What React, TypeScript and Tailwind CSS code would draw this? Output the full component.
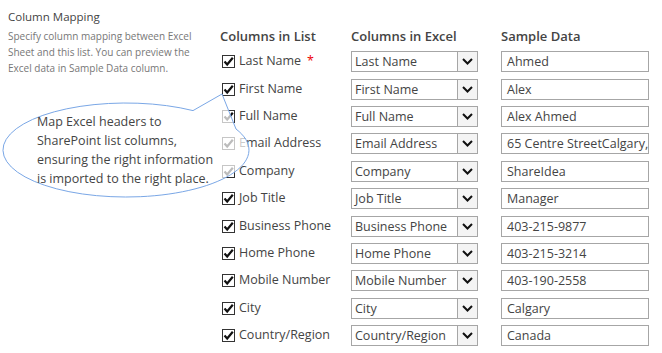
import React from "react"

const rows = [
  { list: "Last Name", excel: "Last Name", sample: "Ahmed", required: true },
  { list: "First Name", excel: "First Name", sample: "Alex" },
  { list: "Full Name", excel: "Full Name", sample: "Alex Ahmed" },
  { list: "Email Address", excel: "Email Address", sample: "65 Centre StreetCalgary," },
  { list: "Company", excel: "Company", sample: "ShareIdea" },
  { list: "Job Title", excel: "Job Title", sample: "Manager" },
  { list: "Business Phone", excel: "Business Phone", sample: "403-215-9877" },
  { list: "Home Phone", excel: "Home Phone", sample: "403-215-3214" },
  { list: "Mobile Number", excel: "Mobile Number", sample: "403-190-2558" },
  { list: "City", excel: "City", sample: "Calgary" },
  { list: "Country/Region", excel: "Country/Region", sample: "Canada" },
]

function CheckBox() {
  return (
    <svg width="13" height="13" viewBox="0 0 13 13" className="shrink-0">
      <rect x="0.5" y="0.5" width="12" height="12" fill="#fff" stroke="#333" />
      <path d="M2.5 6.5 L5.2 9.5 L10.8 2.8" fill="none" stroke="#111" strokeWidth="2.2" />
    </svg>
  )
}

function Chevron() {
  return (
    <svg width="11" height="7" viewBox="0 0 11 7">
      <path d="M1 1 L5.5 5.5 L10 1" fill="none" stroke="#111" strokeWidth="2" />
    </svg>
  )
}

// speech bubble laid over the first column
function Callout() {
  return (
    <div className="absolute left-0 top-[88px] w-[252px] h-[114px]">
      <svg width="252" height="114" viewBox="0 0 252 114" className="absolute inset-0">
        <path
          d="M193 22.6 L222 6 L236 41 A123 47 0 1 1 193 22.6 Z"
          fill="#ffffff"
          fillOpacity="0.72"
          stroke="#7aa7e6"
          strokeWidth="1"
        />
      </svg>
      <div className="absolute left-[37px] top-[24px] text-[12.5px] leading-[19px] text-[#444]">
        Map Excel headers to
        <br />
        SharePoint list columns,
        <br />
        ensuring the right information
        <br />
        is imported to the right place.
      </div>
    </div>
  )
}

export default function App() {
  return (
    <div
      className="relative w-[662px] h-[353px] bg-white overflow-hidden flex"
      style={{ fontFamily: '"Open Sans", "Liberation Sans", sans-serif' }}
    >
      <div className="w-[220px] shrink-0 pl-2 pt-[9px]">
        <div className="text-[11.5px] leading-4 text-[#444]">Column Mapping</div>
        <div className="mt-[3px] w-[200px] text-[10px] leading-4 text-[#777]">
          Specify column mapping between Excel Sheet and this list. You can preview the Excel data in Sample Data column.
        </div>
      </div>

      <div className="pt-[27px]">
        <div className="grid grid-cols-[131px_150px_148px] h-[18px] items-center text-[13px] font-semibold text-[#444]">
          <div>Columns in List</div>
          <div>Columns in Excel</div>
          <div>Sample Data</div>
        </div>
        <div className="mt-[3px] flex flex-col">
          {rows.map((r) => (
            <div key={r.list} className="grid grid-cols-[131px_150px_148px] h-[27.4px] items-center">
              <div className="flex items-center gap-[4px] pl-[2px] text-[12.5px] text-[#444]">
                <CheckBox />
                <span>{r.list}</span>
                {r.required && <span className="text-[#e00] ml-[2px]">*</span>}
              </div>
              <div className="flex h-[21px] w-[127px] border border-[#a6a6a6] bg-white">
                <div className="flex-1 pl-[3px] text-[12.5px] leading-[19px] text-[#444] whitespace-nowrap overflow-hidden">
                  {r.excel}
                </div>
                <div className="w-[20px] border-l border-[#a6a6a6] bg-[#f4f4f4] flex items-center justify-center">
                  <Chevron />
                </div>
              </div>
              <div className="h-[21px] w-[148px] border border-[#a6a6a6] bg-white pl-[5px] text-[12.5px] leading-[19px] text-[#444] whitespace-nowrap overflow-hidden">
                {r.sample}
              </div>
            </div>
          ))}
        </div>
      </div>

      <Callout />
    </div>
  )
}
